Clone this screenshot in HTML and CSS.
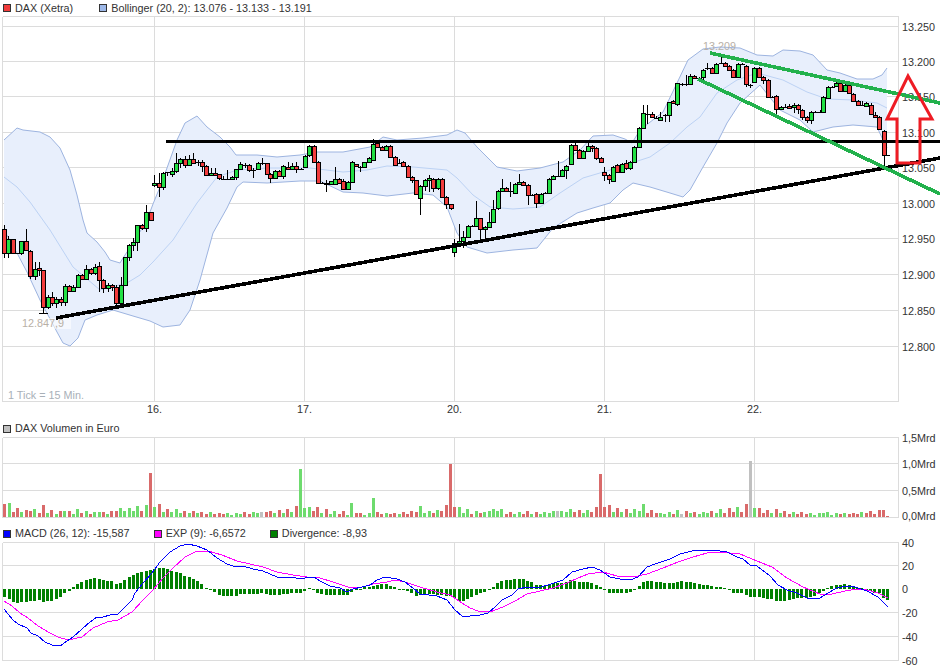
FILE: index.html
```html
<!DOCTYPE html>
<html lang="de">
<head>
    <meta charset="UTF-8">
    <title>DAX (Xetra) Chart</title>
    <link rel="stylesheet" href="styles.css">
</head>
<body>
<main class="chart">
    <!-- Kurs -->
    <div class="legend legend-first">
        <span class="legend-item"><i class="swatch swatch-dax"></i>DAX (Xetra)</span>
        <span class="legend-item"><i class="swatch swatch-boll"></i>Bollinger (20, 2): 13.076 - 13.133 - 13.191</span>
    </div>
    <svg class="plot price-plot" viewBox="0 16 940 405">
        <g id="price-grid"></g>
        <g id="bollinger"></g>
        <g id="candles"></g>
        <rect class="label-bg" x="22" y="318" width="49" height="11"></rect>
        <text class="mark-label" x="22" y="327">12.847,9</text>
        <text class="mark-label" x="703" y="50">13.209</text>
        <text class="tick-note" x="8" y="399">1 Tick = 15 Min.</text>
        <line class="trend-flat" x1="166" y1="141.5" x2="940" y2="141.5"></line>
        <line class="trend trend-black" x1="56" y1="318" x2="940" y2="158"></line>
        <line class="trend trend-green" x1="710" y1="53" x2="940" y2="103"></line>
        <line class="trend trend-green" x1="698" y1="79" x2="940" y2="194"></line>
        <polygon class="arrow" points="908,76 932,119 920,119 920,163 897,163 897,119 887,119"></polygon>
    </svg>

    <!-- Volumen -->
    <div class="legend">
        <span class="legend-item"><i class="swatch swatch-vol"></i>DAX Volumen in Euro</span>
    </div>
    <svg class="plot volume-plot" viewBox="0 436 940 90">
        <g id="volume-grid"></g>
        <g id="volume"></g>
    </svg>

    <!-- MACD -->
    <div class="legend">
        <span class="legend-item"><i class="swatch swatch-macd"></i>MACD (26, 12): -15,587</span>
        <span class="legend-item"><i class="swatch swatch-exp"></i>EXP (9): -6,6572</span>
        <span class="legend-item"><i class="swatch swatch-div"></i>Divergence: -8,93</span>
    </div>
    <svg class="plot macd-plot" viewBox="0 541 940 129">
        <g id="macd-grid"></g>
        <g id="divergence"></g>
        <polyline id="line-exp" class="line-exp"></polyline>
        <polyline id="line-macd" class="line-macd"></polyline>
    </svg>
</main>
<script src="script.js"></script>
</body>
</html>
```

FILE: styles.css
```css
* {
    margin: 0;
    padding: 0;
    box-sizing: border-box;
}
html, body {
    background: #ffffff;
    overflow: hidden;
}
body {
    font-family: "Liberation Sans", Arial, sans-serif;
    font-size: 10.8px;
    color: #333;
}
.chart {
    width: 940px;
    height: 670px;
}
.legend {
    display: flex;
    gap: 24px;
    height: 15px;
    padding-left: 3px;
    line-height: 13px;
    white-space: nowrap;
}
.legend-first {
    gap: 26px;
    height: 16px;
}
.legend-item {
    display: flex;
    align-items: center;
    gap: 4px;
}
.swatch {
    display: block;
    width: 8px;
    height: 8px;
    border: 1px solid #333;
}
.swatch-dax { background: #f23c3c; }
.swatch-boll { background: #9db8e8; }
.swatch-vol { background: #c0c0c0; }
.swatch-macd { background: #0000ff; }
.swatch-exp { background: #ff00ff; }
.swatch-div { background: #008000; }

.plot {
    display: block;
    width: 940px;
    overflow: visible;
}
.price-plot { height: 405px; }
.volume-plot { height: 90px; }
.macd-plot { height: 129px; }

.grid-line {
    stroke: #dcdcdc;
    stroke-width: 1;
    shape-rendering: crispEdges;
}
.axis-label, .day-label, .mark-label, .tick-note {
    font-family: "Liberation Sans", Arial, sans-serif;
    font-size: 10.8px;
}
.axis-label, .day-label { fill: #333; }
.day-label { text-anchor: middle; }
.mark-label { fill: #b8b0a6; }
.tick-note { fill: #a8b0b8; }
.label-bg {
    fill: #ffffff;
    opacity: 0.55;
}

.band-fill {
    fill: #e8effc;
    stroke: none;
}
.band-edge, .band-mid {
    fill: none;
    stroke-width: 1;
}
.band-edge { stroke: #9db4e0; }
.band-mid { stroke: #bcd2f4; }

.wick {
    stroke: #000;
    stroke-width: 1;
    shape-rendering: crispEdges;
}
.body {
    stroke: #000;
    stroke-width: 1;
    shape-rendering: crispEdges;
}
.body-g { fill: #22e044; }
.body-r { fill: #f23c3c; }

.trend {
    stroke-width: 3.6;
    shape-rendering: crispEdges;
}
.trend-flat {
    stroke: #000;
    stroke-width: 3;
    shape-rendering: crispEdges;
}
.trend-black { stroke: #000; }
.trend-green { stroke: #22b14c; }
.arrow {
    fill: none;
    stroke: #ee1c24;
    stroke-width: 3;
}

.vol-g { fill: #6edb6e; }
.vol-r { fill: #d96a6a; }
.vol-n { fill: #c0c0c0; }
.div-bar { fill: #008000; }

.line-macd, .line-exp {
    fill: none;
    stroke-width: 1;
    shape-rendering: crispEdges;
}
.line-macd { stroke: #0000ff; }
.line-exp { stroke: #ff00ff; }
```

FILE: script.js
```js
const PLOT_LEFT = 2.5;
const PLOT_RIGHT = 898.5;
const DAY_LINES = [154.5, 304.5, 454.5, 604.5, 754.5];
const TICK_WIDTH = 150 / 35;

function tickX(i) {
    return Math.round(4.3 + i * TICK_WIDTH);
}

function drawGrid(id, top, bottom, rows) {
    let html = '';
    rows.forEach(row => {
        html += `<line class="grid-line" x1="${PLOT_LEFT}" x2="${PLOT_RIGHT}" y1="${row.y}" y2="${row.y}"></line>`;
        if (row.text) {
            html += `<text class="axis-label" x="${row.x || 902}" y="${row.y + 4}">${row.text}</text>`;
        }
    });
    [PLOT_LEFT, ...DAY_LINES, PLOT_RIGHT].forEach(x => {
        html += `<line class="grid-line" x1="${x}" x2="${x}" y1="${top}" y2="${bottom}"></line>`;
    });
    document.getElementById(id).innerHTML = html;
}

function pointsOf(list) {
    return list.map(p => p.join(',')).join(' ');
}

/* ---- Kurs ---- */
drawGrid('price-grid', 16.5, 401.5, [
    { y: 16.5 },
    { y: 26.5, text: '13.250' },
    { y: 61.5, text: '13.200' },
    { y: 96.5, text: '13.150' },
    { y: 132.5, text: '13.100' },
    { y: 167.5, text: '13.050' },
    { y: 203.5, text: '13.000' },
    { y: 238.5, text: '12.950' },
    { y: 274.5, text: '12.900' },
    { y: 310.5, text: '12.850' },
    { y: 346.5, text: '12.800' },
    { y: 401.5 }
]);

document.getElementById('price-grid').innerHTML += ['16.', '17.', '20.', '21.', '22.'].map((day, i) =>
    `<text class="day-label" x="${DAY_LINES[i]}" y="413">${day}</text>`
).join('');

const upperBand = [[4,140],[17,128],[23,130],[40,132],[50,137],[60,148],[70,170],[77,195],[83,220],[87,233],[97,242],[105,252],[110,260],[120,263],[123,258],[135,240],[147,220],[153,204],[160,187],[167,168],[177,140],[185,123],[197,116],[207,127],[220,137],[230,147],[236,155],[257,155],[277,157],[300,155],[317,152],[343,152],[370,147],[383,137],[397,140],[423,138],[447,135],[457,130],[465,133],[477,147],[490,160],[497,167],[517,171],[540,168],[563,162],[580,150],[593,136],[613,135],[625,139],[632,143],[640,130],[663,112],[677,83],[688,60],[703,49],[720,47],[740,48],[757,55],[773,56],[783,50],[800,51],[813,55],[827,70],[840,73],[857,79],[873,79],[882,75],[887,68]];
const lowerBand = [[4,230],[17,253],[27,272],[40,300],[57,332],[63,343],[70,346],[78,338],[85,320],[97,315],[113,310],[133,316],[150,321],[163,327],[180,325],[190,310],[200,280],[213,233],[227,208],[237,187],[243,182],[267,183],[300,181],[320,181],[343,192],[363,193],[387,196],[413,193],[433,195],[447,207],[457,233],[467,247],[487,253],[513,250],[537,248],[553,228],[577,213],[593,208],[610,203],[623,190],[633,183],[650,187],[670,193],[683,197],[690,190],[703,167],[717,143],[727,123],[740,103],[760,85],[780,110],[800,120],[813,132],[833,127],[853,125],[877,127],[883,140],[887,148]];
const midBand = [[4,177],[17,187],[30,202],[50,230],[73,267],[100,290],[127,283],[140,275],[153,262],[173,240],[197,203],[217,177],[237,170],[267,168],[310,168],[343,172],[367,170],[387,166],[413,167],[447,170],[457,178],[473,195],[490,207],[513,209],[540,207],[560,193],[583,178],[610,170],[650,157],[670,143],[687,127],[700,117],[717,93],[737,80],[757,73],[783,80],[807,92],[827,99],[853,100],[877,103],[887,108]];

document.getElementById('bollinger').innerHTML = `
    <polygon class="band-fill" points="${pointsOf(upperBand)} ${pointsOf([...lowerBand].reverse())}"></polygon>
    <polyline class="band-edge" points="${pointsOf(upperBand)}"></polyline>
    <polyline class="band-edge" points="${pointsOf(lowerBand)}"></polyline>
    <polyline class="band-mid" points="${pointsOf(midBand)}"></polyline>`;

// x, top, bottom, high, low, colour
const g = 'g', r = 'r', k = 'k';
const candles = [
    [4,229,253,225,258,r],[8,239,253,236,258,g],[13,239,253,239,254,r],[17,253,253,253,254,k],[21,241,253,241,255,g],[26,241,250,229,250,r],[30,251,276,250,279,r],[35,269,276,262,280,g],[39,268,270,262,276,r],[43,270,307,270,313,r],[48,297,307,295,309,g],[52,297,303,292,306,r],[56,299,303,297,308,g],[61,299,302,297,306,r],[65,286,302,284,306,g],[69,286,291,285,292,r],[73,287,291,285,292,g],[78,275,287,274,288,g],[82,275,279,274,280,r],[86,269,279,265,280,g],[91,269,273,268,275,r],[95,267,273,264,275,g],[99,266,280,262,292,r],[103,280,288,279,293,r],[108,285,288,283,292,g],[112,285,287,284,291,r],[116,287,303,285,305,r],[121,285,303,277,305,g],[125,257,285,257,286,g],[129,245,257,244,261,g],[133,242,245,238,251,g],[137,225,242,225,251,g],[142,225,228,224,230,r],[146,212,228,205,232,g],[151,212,220,212,221,r],
    [154,183,185,175,187,g],[159,183,187,173,197,r],[163,173,187,172,190,g],[167,172,172,172,176,k],[172,171,174,168,177,g],[176,163,171,153,173,g],[180,159,163,158,168,g],[185,159,165,156,168,r],[189,159,165,155,166,g],[193,159,163,153,164,r],[198,162,162,160,166,k],[202,162,166,160,172,r],[206,166,175,165,176,r],[211,173,175,168,176,g],[215,173,175,168,176,r],[219,174,178,174,180,r],[223,179,179,176,180,k],[227,179,179,170,180,k],[232,177,179,176,180,g],[236,169,177,169,180,g],[240,164,169,162,170,g],[245,165,165,163,168,k],[249,165,170,164,172,r],[253,170,170,168,178,k],[258,163,169,162,170,g],[262,163,163,158,165,k],[267,163,174,163,175,r],[270,174,178,173,183,r],[275,171,178,170,179,g],[279,171,176,170,177,r],[283,166,176,165,179,g],[288,167,169,162,170,r],[292,166,169,163,170,g],[296,166,169,162,173,r],[301,169,169,168,170,k],
    [305,156,167,155,168,g],[309,146,155,145,157,g],[314,146,162,145,163,r],[318,162,183,161,184,r],[322,183,183,182,184,k],[326,183,184,180,192,g],[331,181,184,181,185,g],[335,179,184,167,185,g],[339,179,183,178,184,r],[343,181,189,179,190,r],[348,182,189,181,190,g],[352,162,182,161,183,g],[356,164,166,164,167,r],[360,167,167,166,172,k],[364,162,167,162,168,g],[369,158,162,157,163,g],[373,144,160,139,160,g],[377,143,147,142,148,r],[382,147,150,146,151,r],[386,146,150,145,151,g],[390,146,157,145,158,r],[395,157,165,156,166,r],[399,163,163,159,164,k],[403,162,166,161,167,r],[408,166,177,165,178,r],[412,177,180,176,183,r],[416,180,194,180,195,r],[420,186,198,185,215,g],[425,180,186,179,191,g],[429,178,180,175,192,g],[433,179,188,178,192,r],[438,179,188,178,190,g],[442,179,197,178,198,r],[446,197,204,196,209,r],[451,204,208,204,210,r],
    [454,243,252,239,257,g],[459,241,244,224,247,g],[463,237,241,231,248,g],[468,226,237,225,238,g],[472,226,226,225,227,k],[476,218,226,201,226,g],[480,218,229,218,239,r],[485,227,229,226,240,g],[489,222,227,212,228,g],[493,209,222,200,223,g],[498,191,208,190,210,g],[502,188,191,179,192,g],[506,188,191,187,192,r],[510,191,191,182,197,k],[515,184,193,183,194,g],[519,182,184,174,185,g],[523,182,185,181,186,r],[528,185,195,184,205,r],[532,195,195,194,196,k],[536,194,203,193,208,r],[541,194,203,193,204,g],[545,193,193,192,194,k],[549,179,193,178,194,g],[553,176,179,175,180,g],[558,176,176,161,177,k],[562,170,176,169,177,g],[566,166,170,165,179,g],[571,145,164,144,165,g],[575,145,150,143,151,r],[579,150,158,149,159,r],[583,151,158,150,159,g],[588,146,151,143,152,g],[592,146,148,145,152,r],[596,148,158,147,160,r],[601,158,162,157,163,r],
    [604,172,175,167,181,r],[609,175,179,174,184,r],[613,167,181,166,182,g],[617,165,172,164,173,r],[622,164,172,163,173,g],[626,163,168,160,170,r],[630,162,168,161,170,g],[634,147,162,146,163,g],[639,128,147,127,148,g],[643,113,128,105,129,g],[647,114,114,105,124,k],[652,114,117,112,118,r],[656,118,118,116,119,k],[660,117,120,112,121,g],[665,115,115,114,122,k],[669,102,115,102,122,g],[673,101,103,100,104,r],[677,83,104,83,106,g],[682,84,84,83,86,k],[686,84,84,75,86,k],[690,76,84,74,85,g],[694,76,78,75,79,r],[699,78,78,77,79,k],[703,70,77,69,80,g],[707,68,68,63,70,k],[712,68,73,67,74,r],[716,64,73,63,74,g],[721,63,63,55,64,k],[725,63,66,62,67,r],[729,66,70,65,71,r],[733,70,77,69,78,r],[738,64,77,63,78,g],[742,64,64,63,65,k],[746,66,84,65,87,r],[750,85,85,84,88,k],
    [754,68,82,67,83,g],[759,68,77,67,78,r],[763,77,80,76,84,r],[768,80,97,79,98,r],[772,97,97,96,98,k],[776,96,109,95,117,r],[781,107,109,106,110,g],[785,107,107,104,108,k],[789,106,108,104,109,r],[794,105,107,103,113,g],[798,105,109,104,114,r],[802,110,117,109,120,r],[807,117,120,116,123,r],[811,112,120,111,124,g],[815,112,112,111,113,k],[820,112,112,110,113,k],[823,97,112,96,113,g],[828,87,98,86,99,g],[832,87,87,86,88,k],[836,83,86,82,87,g],[840,83,91,82,92,r],[845,85,91,84,92,g],[849,85,93,84,94,r],[853,94,101,93,102,r],[858,101,105,100,106,r],[862,105,105,101,106,k],[866,103,106,102,107,g],[871,105,114,103,115,r],[875,115,117,112,118,r],[879,117,129,116,130,r],[884,131,155,130,166,r]
];

let candleHtml = '';
candles.forEach(([x, top, bottom, high, low, colour]) => {
    candleHtml += `<line class="wick" x1="${x + 0.5}" x2="${x + 0.5}" y1="${high}" y2="${low}"></line>`;
    if (colour === k) {
        candleHtml += `<line class="wick" x1="${x - 2}" x2="${x + 3}" y1="${top + 0.5}" y2="${top + 0.5}"></line>`;
    } else {
        candleHtml += `<rect class="body body-${colour}" x="${x - 1.5}" y="${top + 0.5}" width="4" height="${bottom - top}"></rect>`;
    }
});
// Tief- und Schlussmarke
candleHtml += '<line class="wick" x1="39" x2="48" y1="313.5" y2="313.5"></line>';
candleHtml += '<line class="wick" x1="884" x2="890" y1="155.5" y2="155.5"></line>';
document.getElementById('candles').innerHTML = candleHtml;

/* ---- Volumen ---- */
drawGrid('volume-grid', 437.5, 517.5, [
    { y: 437.5, text: '1,5Mrd' },
    { y: 463.5, text: '1,0Mrd' },
    { y: 490.5, text: '0,5Mrd' },
    { y: 517.5 }
]);
document.getElementById('volume-grid').innerHTML += '<text class="axis-label" x="902" y="520">0,0Mrd</text>';

const volumes = ('13r 14g 5r 9r 5g 7r 6r 8g 4r 12r 4g 7r 3g 6r 6g 6r 3g 8g 4r 6g 3r 5g 5g 5r 3g 6r 6r 9g 6g 9g 6g 11g 6r 12g 44r ' +
    '10g 13r 5g 8r 5g 8g 4g 6r 4g 6r 4g 5r 3r 5g 3r 4r 3r 4g 2g 4g 3g 5r 3r 5g 4g 5n 5r 6r 4g 7r 4g 8r 5g 11r 48g ' +
    '9g 10g 6r 10r 4g 8r 3g 6g 3r 6r 2g 14g 4r 4r 2g 4g 19g 5r 3r 4g 3r 4r 3g 5r 3r 6r 5r 11g 4g 6g 4r 7g 6r 12r 53r ' +
    '10r 10g 4g 8g 3r 6g 4r 5g 6g 8g 6g 8g 3r 5r 3g 5g 3r 6r 3g 5r 3g 5g 4g 6g 6n 6g 5g 8g 5r 7r 4g 7g 5r 10r 43r ' +
    '10r 12r 5g 9r 5g 8r 4g 8g 6g 13g 4r 7r 4r 4g 3g 5g 3r 7g 3n 6r 4g 5r 3g 5g 4g 6r 4g 8g 4r 9r 5r 10g 5r 13r 56n ' +
    '9g 9r 4r 7r 4g 8r 4g 6r 3r 5g 3r 5r 3r 4g 2g 4g 4g 5g 2g 4g 3r 4g 3r 4r 3r 5g 4r 6r 3r 7r 7r 1r').split(' ');

document.getElementById('volume').innerHTML = volumes.map((item, i) => {
    const height = parseInt(item);
    const colour = item.slice(-1);
    return `<rect class="vol-${colour}" x="${tickX(i) - 1}" y="${517 - height}" width="3" height="${height}"></rect>`;
}).join('');

/* ---- MACD ---- */
drawGrid('macd-grid', 542.5, 660.5, [
    { y: 542.5, text: '40' },
    { y: 565.5, text: '20' },
    { y: 612.5, text: '-20' },
    { y: 636.5, text: '-40' },
    { y: 660.5, text: '-60' }
]);
document.getElementById('macd-grid').innerHTML += '<text class="axis-label" x="902" y="593">0</text>';

const divergence = [-8,-10,-13,-14,-13,-13,-12,-12,-11,-13,-12,-12,-10,-8,-4,-2,2,5,7,9,10,11,10,9,8,8,5,6,9,12,14,16,17,18,19,20,21,21,20,18,17,16,13,12,10,8,5,1,-1,-3,-6,-7,-7,-7,-7,-5,-5,-5,-5,-5,-4,-5,-6,-6,-6,-5,-5,-4,-4,-4,-2,1,-1,-4,-5,-6,-6,-6,-6,-6,-6,-3,-1,-1,2,2,3,4,5,5,3,2,-1,-1,-2,-4,-7,-6,-6,-5,-5,-6,-6,-7,-7,-9,-12,-12,-10,
    -8,-6,-4,-3,-1,2,6,8,9,9,10,10,10,8,7,4,4,3,5,6,6,6,7,9,8,7,7,7,6,4,2,-1,-4,-4,-4,-4,-4,-3,-1,3,7,8,8,7,7,6,6,6,7,8,7,7,6,5,4,4,3,2,2,1,-1,-4,-4,-4,-6,-8,-8,-8,-9,-10,-10,-12,-12,-12,-11,-10,-9,-9,-9,-8,-7,-4,-2,1,3,4,4,5,4,2,1,1,-1,-2,-4,-4,-9,-11];

document.getElementById('divergence').innerHTML = divergence.map((value, i) => {
    const y = value > 0 ? 589 - value : 589;
    return `<rect class="div-bar" x="${tickX(i) - 1}" y="${y}" width="3" height="${Math.abs(value)}"></rect>`;
}).join('');

const macdLine = [[4,609],[8,614],[13,620],[18,624],[27,628],[31,633],[38,636],[45,642],[52,645],[60,646],[67,641],[73,637],[82,629],[90,622],[97,617],[103,617],[110,615],[118,614],[125,607],[132,600],[135,593],[143,583],[152,573],[160,562],[170,552],[180,546],[188,544],[197,546],[207,550],[217,558],[227,564],[233,566],[243,566],[253,569],[263,571],[277,577],[290,577],[302,579],[308,577],[314,577],[320,581],[330,586],[340,588],[347,592],[353,589],[362,587],[370,585],[377,580],[385,577],[397,579],[405,582],[413,588],[420,594],[437,596],[447,600],[455,610],[462,616],[470,616],[480,615],[488,613],[495,607],[502,600],[512,595],[518,589],[527,587],[537,588],[548,585],[563,580],[572,572],[583,569],[592,567],[600,570],[610,577],[620,579],[630,580],[638,577],[647,567],[655,564],[670,559],[680,554],[692,551],[707,550],[720,551],[727,552],[737,557],[743,559],[750,565],[757,566],[770,576],[778,585],[787,590],[797,593],[807,598],[820,598],[828,593],[837,588],[847,586],[855,587],[867,591],[878,597],[888,607]];
const expLine = [[4,601],[12,606],[20,613],[28,618],[38,626],[50,633],[58,637],[68,640],[82,637],[93,628],[107,622],[118,620],[132,612],[143,600],[153,590],[163,578],[173,568],[185,557],[197,551],[208,551],[222,555],[237,561],[250,564],[263,567],[277,572],[293,575],[307,577],[320,578],[333,582],[348,587],[362,587],[373,584],[387,582],[395,580],[405,582],[420,587],[437,592],[450,595],[462,603],[470,608],[478,611],[490,612],[503,607],[515,601],[527,594],[540,591],[553,588],[567,583],[578,578],[588,574],[603,572],[617,576],[633,577],[647,574],[663,568],[678,562],[693,557],[707,553],[720,552],[740,554],[757,561],[772,567],[787,578],[803,587],[820,594],[832,594],[845,591],[857,589],[867,590],[878,593],[888,598]];

document.getElementById('line-macd').setAttribute('points', pointsOf(macdLine));
document.getElementById('line-exp').setAttribute('points', pointsOf(expLine));
```
